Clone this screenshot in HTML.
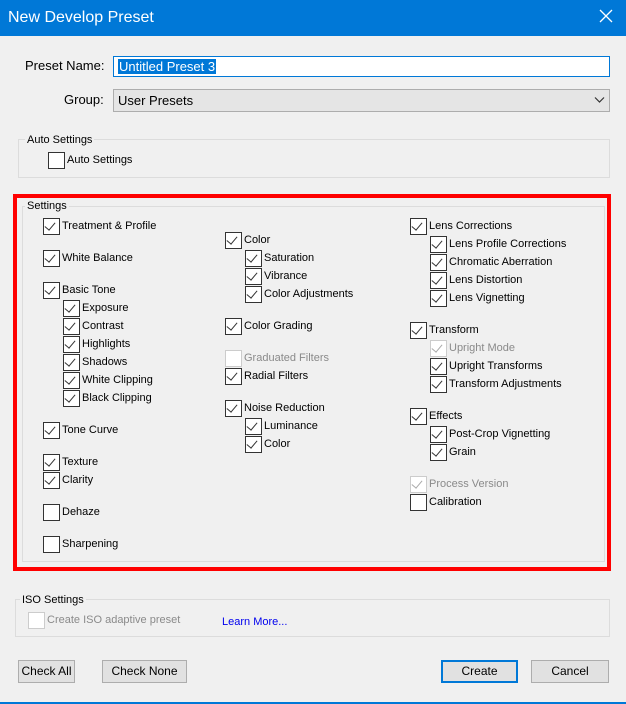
<!DOCTYPE html>
<html><head><meta charset="utf-8"><style>
*{box-sizing:border-box;margin:0;padding:0}
body{width:626px;height:704px;background:#f0f0f0;font-family:"Liberation Sans",sans-serif;font-size:11px;color:#000;position:relative;overflow:hidden}
.t{position:absolute;left:0;top:0;width:626px;height:36px;background:#0078d7;color:#fff;font-size:16px;line-height:36px;padding-left:8px}
.x{position:absolute;right:12px;top:8px;width:16px;height:16px}
.a{position:absolute;white-space:nowrap;line-height:16px}
.c{position:absolute;height:16px;line-height:16px;white-space:nowrap;padding-left:19px;font-size:11px}
.c::before{content:"";position:absolute;left:0;top:0;width:15px;height:15px;border:1px solid #333;background:#fff}
.c.k::after{content:"";position:absolute;left:4px;top:2px;width:5px;height:9px;border-right:1.5px solid #333;border-bottom:1.5px solid #333;transform:rotate(40deg)}
.c.d{color:#8a8a8a}
.c.d::before{border-color:#ccc}
.c.d.k::after{border-color:#aaa}
.g{position:absolute;border:1px solid #dcdcdc}
.gl{position:absolute;background:#f0f0f0;padding:0 2px;line-height:14px;font-size:11px}
.b{position:absolute;height:23px;border:1px solid #adadad;background:#e1e1e1;text-align:center;line-height:21px;font-size:12px}
</style></head><body>
<div class="t">New Develop Preset</div>
<svg class="x" viewBox="0 0 16 16"><path d="M2 2L14 14M14 2L2 14" stroke="#fff" stroke-width="1.3"/></svg>
<div class="a" style="left:25px;top:58px;font-size:13px">Preset Name:</div>
<div style="position:absolute;left:113px;top:56px;width:497px;height:21px;border:1px solid #0078d7;background:#fff"><span style="position:absolute;left:4px;top:2px;background:#0078d7;color:#fff;font-size:13px;line-height:15px;padding:0 1px">Untitled Preset 3</span></div>
<div class="a" style="left:64px;top:92px;font-size:13px">Group:</div>
<div style="position:absolute;left:113px;top:89px;width:497px;height:23px;border:1px solid #adadad;background:#e5e5e5;font-size:13px;line-height:21px;padding-left:4px">User Presets<svg style="position:absolute;right:4px;top:6px" width="11" height="8" viewBox="0 0 11 8"><path d="M1 1.5L5.5 6L10 1.5" stroke="#333" fill="none" stroke-width="1.2"/></svg></div>
<div class="g" style="left:18px;top:139px;width:592px;height:39px"></div>
<div class="gl" style="left:25px;top:133px">Auto Settings</div>
<div class="c" style="left:48px;top:152px">Auto Settings</div>

<div style="position:absolute;left:13px;top:194px;width:598px;height:377px;border:4px solid #f00"></div>
<div class="g" style="left:22px;top:206px;width:583px;height:356px"></div>
<div class="gl" style="left:25px;top:199px;background:#f0f0f0">Settings</div>

<div class="c k" style="left:43px;top:218px">Treatment &amp; Profile</div>
<div class="c k" style="left:43px;top:250px">White Balance</div>
<div class="c k" style="left:43px;top:282px">Basic Tone</div>
<div class="c k" style="left:63px;top:300px">Exposure</div>
<div class="c k" style="left:63px;top:318px">Contrast</div>
<div class="c k" style="left:63px;top:336px">Highlights</div>
<div class="c k" style="left:63px;top:354px">Shadows</div>
<div class="c k" style="left:63px;top:372px">White Clipping</div>
<div class="c k" style="left:63px;top:390px">Black Clipping</div>
<div class="c k" style="left:43px;top:422px">Tone Curve</div>
<div class="c k" style="left:43px;top:454px">Texture</div>
<div class="c k" style="left:43px;top:472px">Clarity</div>
<div class="c" style="left:43px;top:504px">Dehaze</div>
<div class="c" style="left:43px;top:536px">Sharpening</div>

<div class="c k" style="left:225px;top:232px">Color</div>
<div class="c k" style="left:245px;top:250px">Saturation</div>
<div class="c k" style="left:245px;top:268px">Vibrance</div>
<div class="c k" style="left:245px;top:286px">Color Adjustments</div>
<div class="c k" style="left:225px;top:318px">Color Grading</div>
<div class="c d" style="left:225px;top:350px">Graduated Filters</div>
<div class="c k" style="left:225px;top:368px">Radial Filters</div>
<div class="c k" style="left:225px;top:400px">Noise Reduction</div>
<div class="c k" style="left:245px;top:418px">Luminance</div>
<div class="c k" style="left:245px;top:436px">Color</div>

<div class="c k" style="left:410px;top:218px">Lens Corrections</div>
<div class="c k" style="left:430px;top:236px">Lens Profile Corrections</div>
<div class="c k" style="left:430px;top:254px">Chromatic Aberration</div>
<div class="c k" style="left:430px;top:272px">Lens Distortion</div>
<div class="c k" style="left:430px;top:290px">Lens Vignetting</div>
<div class="c k" style="left:410px;top:322px">Transform</div>
<div class="c k d" style="left:430px;top:340px">Upright Mode</div>
<div class="c k" style="left:430px;top:358px">Upright Transforms</div>
<div class="c k" style="left:430px;top:376px">Transform Adjustments</div>
<div class="c k" style="left:410px;top:408px">Effects</div>
<div class="c k" style="left:430px;top:426px">Post-Crop Vignetting</div>
<div class="c k" style="left:430px;top:444px">Grain</div>
<div class="c k d" style="left:410px;top:476px">Process Version</div>
<div class="c" style="left:410px;top:494px">Calibration</div>

<div class="g" style="left:15px;top:599px;width:595px;height:38px"></div>
<div class="gl" style="left:20px;top:593px">ISO Settings</div>
<div class="c d" style="left:28px;top:612px">Create ISO adaptive preset</div>
<div class="a" style="left:222px;top:614px;color:#0000ee">Learn More...</div>

<div class="b" style="left:18px;top:660px;width:57px">Check All</div>
<div class="b" style="left:102px;top:660px;width:85px">Check None</div>
<div class="b" style="left:441px;top:660px;width:77px;border:2px solid #0078d7;line-height:19px">Create</div>
<div class="b" style="left:531px;top:660px;width:78px">Cancel</div>
<div style="position:absolute;left:0;top:702px;width:626px;height:2px;background:#0078d7"></div>
</body></html>
